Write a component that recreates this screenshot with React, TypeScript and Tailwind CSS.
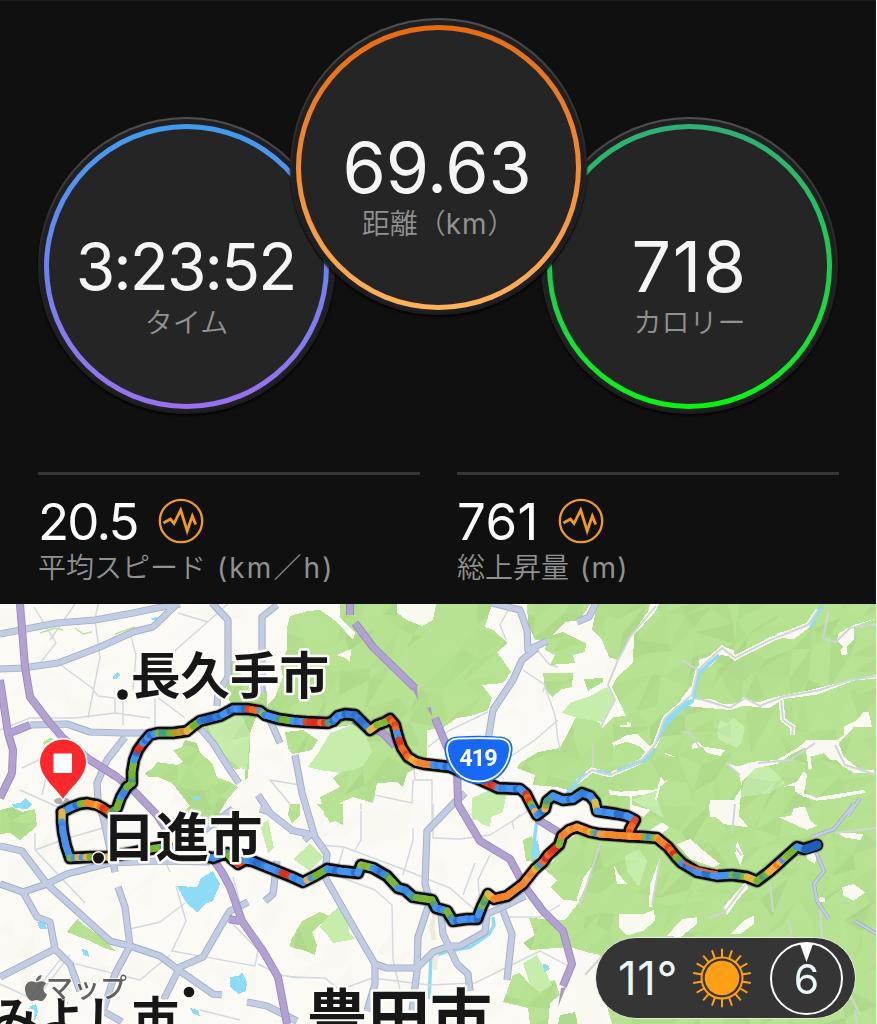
import { ReactNode } from 'react'
import { FaApple } from 'react-icons/fa'

type Point = [number, number]

const UI_FONT = "font-['Inter','Noto_Sans_CJK_JP',sans-serif]"

export default function App() {
  return (
    <main
      className={`flex h-[1024px] w-[876px] flex-col overflow-hidden border-t border-[#1b1b1b] bg-[#101010] ${UI_FONT}`}
    >
      <section className="h-[603px] shrink-0">
        <div className="flex h-[471px] items-start pl-[38px]">
          <Dial
            label="タイム"
            className="mt-[116px]"
            ring="bg-linear-to-b from-[#409bed] via-[#6b82f2] to-[#9971ee]"
          >
            <span className="mr-[2px] text-[64px] tracking-[-1.9px]">3:23:52</span>
          </Dial>
          <Dial
            label={
              <>
                距離（<span className="font-normal tracking-[0.8px]">km</span>）
              </>
            }
            className="z-10 -ml-[45px] mt-[17px]"
            ring="bg-linear-to-b from-[#e56b14] via-[#f08b31] to-[#fcb35c]"
          >
            <span className="mr-[3px] text-[70px] tracking-[-0.2px]">69.63</span>
          </Dial>
          <Dial
            label="カロリー"
            className="-ml-[46px] mt-[116px]"
            ring="bg-linear-to-b from-[#30ae77] via-[#1dcc49] to-[#0af20c]"
          >
            <span className="text-[70px] tracking-[1.5px]">718</span>
          </Dial>
        </div>

        <div className="flex gap-[37px] pl-[38px]">
          <Stat
            label="平均スピード"
            unit={<span className="font-normal tracking-[2.1px]">(km／h)</span>}
          >
            <span className="w-[120px] tracking-[-1.8px]">20.5</span>
          </Stat>
          <Stat
            label="総上昇量"
            unit={<span className="font-normal tracking-[1.2px]">(m)</span>}
          >
            <span className="w-[101px] tracking-[0.4px]">761</span>
          </Stat>
        </div>
      </section>

      <RouteMap />
    </main>
  )
}

interface DialProps {
  label: ReactNode
  ring: string
  className: string
  children: ReactNode
}

const Dial = ({ label, ring, className, children }: DialProps) => (
  <div
    className={`size-[297px] shrink-0 rounded-full bg-linear-to-b from-[#505050] via-[#232325] via-50% to-[#1c1c1d] p-[2px] shadow-[0_2px_2px_#040404] ${className}`}
  >
    <div className="size-full rounded-full bg-[#202022] px-[4px] pt-[5px] pb-[3px]">
      <div className={`size-full rounded-full p-[5px] ${ring}`}>
        <div className="flex size-full flex-col items-center rounded-full bg-[#252525] pt-[97px]">
          <div className="flex h-[82px] items-center leading-none text-[#f5f5f5]">
            {children}
          </div>
          <p className="-mt-[3px] text-[28px] font-[350] leading-[36px] text-[#919191]">
            {label}
          </p>
        </div>
      </div>
    </div>
  </div>
)

interface StatProps {
  label: string
  unit: ReactNode
  children: ReactNode
}

const Stat = ({ label, unit, children }: StatProps) => (
  <div className="w-[382px] border-t-[3px] border-[#353535] pt-[21px]">
    <div className="flex h-[50px] items-center text-[51px] leading-none text-white">
      {children}
      <svg className="size-[46px]" viewBox="0 0 46 46" fill="none" stroke="#f59b1c">
        <circle cx="23" cy="23" r="21.2" strokeWidth="2.3" />
        <path
          d="M5.5 25 12.3 21 16 25.5 22.7 12 29.2 33 34.3 18 37.7 26.5"
          strokeWidth="2.8"
        />
      </svg>
    </div>
    <p className="mt-[2px] flex gap-[11px] text-[28px] font-[350] leading-[40px] text-[#919191]">
      {label} {unit}
    </p>
  </div>
)

// Small seeded generator so terrain and route speckles are stable
const createRandom = (seed: number) => () => {
  seed = (seed * 16807) % 2147483647
  return seed / 2147483647
}

const FORESTS = [
  '290,616 308,611 320,610 337,622 353,640 355,633 340,618 340,604 492,604 485,627 493,630 508,643 497,652 511,672 503,683 482,685 492,698 488,710 470,716 457,718 443,728 427,730 427,757 413,770 407,773 403,787 397,782 377,783 373,803 353,797 340,803 342,818 325,817 320,797 340,787 333,778 340,773 360,765 370,752 365,735 352,725 330,728 300,727 285,722 262,712 275,697 283,677 280,663 287,650 287,628',
  '285,732 303,730 318,740 312,750 292,754 288,748',
  '145,773 153,768 157,762 177,765 183,762 173,750 182,747 185,740 197,743 200,753 212,763 217,777 230,782 238,787 227,800 220,812 216,830 206,818 180,815 190,806 172,783 158,777 148,777',
  '230,662 238,660 238,670 247,683 260,670 267,693 267,707 257,715 250,733 250,745 248,777 245,780 245,767 235,770 230,763 217,750 203,732 207,723 230,703 227,690',
  '0,810 12,807 22,812 35,809 37,826 25,836 20,840 10,833 0,834',
  '77,919 84,925 100,936 115,951 104,948 90,941 67,932',
  '290,947 291,940 302,921 320,912 330,916 312,932 317,945 315,955 303,950',
  '316,804 343,804 343,825 335,821 330,823 325,813',
  '290,804 300,804 300,815 292,823 288,815',
  '42,743 50,738 54,739 44,745',
  // east side hills
  '527,604 590,604 580,620 565,622 548,640 535,640 528,624',
  '547,637 563,632 585,643 585,652 573,655 575,663 550,665 555,655 545,650',
  '543,673 573,673 572,687 562,689 552,697 545,688',
  '597,604 650,604 648,612 630,637 617,660 609,657 602,640 592,630 594,620',
  '577,604 580,604 577,612 570,615',
  '577,640 586,643 586,648 577,650',
  '584,679 603,678 603,682 588,691',
  '659,604 877,604 877,1024 612,1024 597,972 603,965 600,955 590,953 570,947 530,950 523,943 535,935 529,918 565,920 580,901 563,900 551,887 557,880 543,868 553,862 562,845 577,834 640,840 638,822 600,812 594,796 575,792 557,787 533,785 535,775 517,768 520,763 538,752 560,748 567,735 577,715 599,722 602,728 614,717 626,716 620,703 612,687 617,677 633,663 634,635 655,612',
  '523,840 532,836 537,855 535,862 526,861',
  '503,1002 513,975 520,973 530,985 555,980 560,995 550,1003 548,1024 530,1024 528,1008',
  '560,1015 575,1012 578,1024 558,1024',
]

const GROVES = [
  '308,767 320,750 330,733 352,725 365,733 372,752 362,767 340,773 320,770',
  '207,723 230,703 240,712 250,733 247,770 240,768 217,750',
  '320,927 330,914 343,904 350,934 355,939 333,943 328,936',
  '293,859 310,844 323,857 310,871',
  '470,814 480,804 493,804 490,827 482,824',
  '570,703 590,696 607,687 615,700 602,722 577,718 562,713',
  '472,798 490,790 506,796 503,812 483,820 472,820',
  '523,963 537,955 545,970 552,985 540,992 530,985',
  '260,825 268,820 274,848 268,853',
  '720,720 727,723 734,718 745,727 742,742 737,748 720,740 717,733',
  '754,767 770,767 785,783 770,793 740,797 744,782',
  '632,800 657,790 657,800 664,818 644,807',
  '625,856 639,849 647,861 639,887 627,871',
]

// Clearings are traced at 3x, relative to their own tile
const NORTH_CLEARINGS = [
  '440,140 470,150 470,170 430,165 400,200 366,215 366,180 390,172',
  '310,300 345,255 360,300 400,296 440,313 480,310 500,290 540,308 600,290 700,270 800,245 900,225 900,235 830,242 720,284 620,297 575,325 500,317 460,330 325,318',
  '860,335 875,335 885,380 830,382 785,430 800,470 850,510 890,510 890,520 830,518 800,500 780,480 760,480 740,460 700,470 705,505 695,510 690,470 685,442 640,465 600,492 560,500 535,505 495,545 490,600 475,655 400,650 400,600 470,600 495,560 485,520 450,490 480,500 530,485 600,480 660,445 690,420 780,420 800,405 800,380 840,360',
  '900,55 830,80 830,120 810,140 812,163 795,165 790,150 800,140 780,120 785,100 830,75',
  '680,515 690,525 685,560 680,580 720,592 780,582 860,570 867,578 780,595 720,602 680,590 655,575 655,558 620,560 660,545',
  '345,435 362,425 380,440 445,450 430,468 390,458 375,440 345,447',
  '130,375 150,375 150,365 163,370 163,380 130,380',
  '260,458 275,462 300,472 275,468',
  '105,430 150,405 180,402 205,425 225,445 215,465 190,440 150,425 110,438',
  '252,528 262,545 275,537 250,560 240,600 233,600 240,572 200,585 165,588 165,615 220,630 200,650 160,640 160,590 100,585 95,570 130,575 240,568',
  '640,655 650,625 680,620 690,660',
  '600,100 690,75 700,80 650,118 600,112',
]

const SOUTH_CLEARINGS = [
  '395,0 490,0 485,35 515,70 440,60 395,20',
  '605,40 650,35 660,12 685,10 700,50 720,65 690,78 650,60',
  '300,120 340,105 380,140 430,180 410,190 340,165',
  '480,110 500,155 490,185 475,150',
  '795,250 830,240 865,265 830,290 800,275',
  '715,285 735,278 745,285 745,293 720,293',
  '125,330 200,330 230,318 235,350 200,380 150,395 125,370',
  '315,345 360,340 360,360 310,400 270,395',
  '530,335 530,360 490,390 460,390 500,350',
  '505,235 515,250 480,290 450,335 440,310 460,285',
  '110,180 125,210 150,240 120,240',
  '50,180 30,240 0,300 0,280 20,220',
  '250,160 235,240 225,310 215,310 220,240',
  '780,85 860,90 850,108 800,100',
  '255,55 278,70 250,92 215,80',
  '685,130 720,140 715,180 690,165',
  '0,440 45,450 100,475 60,530 85,620 80,660 0,660',
]

const PONDS = [
  '177,886 197,887 201,878 213,871 220,884 213,901 205,904 197,912 187,904',
  '230,977 238,976 242,972 247,982 246,991 239,994 230,987',
  '12,804 20,803 25,798 32,804 27,809 14,808',
  '37,922 45,921 47,929 40,929',
  '82,949 88,951 89,957 83,955',
  '113,676 117,672 120,675 117,679 113,679',
  '151,618 157,617 158,620 152,620',
  '192,797 198,796 202,799 195,801',
  '30,1006 36,1004 38,1012 34,1024 28,1016',
  '190,1008 198,1010 200,1016 193,1014',
  '60,1004 66,995 68,1004',
  '543,964 548,965 550,969 544,972',
]

const HIGHWAYS = [
  'M0 634 57 623 95 620 133 613 157 608 180 604',
  'M0 669 23 668 58 663 100 647 133 632 153 627 178 603',
  'M212 603 228 620 228 677 218 693 217 706',
  'M277 605 262 617 262 693',
  'M270 720 280 743 M295 755 302 793 315 837 327 854 325 877 350 921 375 964 375 984 367 1011',
  'M30 725 67 724 90 732 123 733 150 733',
  'M125 737 107 760 97 783 98 800 103 817 115 872',
  'M200 728 213 743 230 770 239 783',
  'M258 795 270 813 293 831 M260 809 270 812 M203 831 233 809',
  'M0 846 22 851 47 884 110 941 130 946 160 956 180 971 213 994 222 995',
  'M0 884 23 892 47 884 67 874 110 863 160 861 210 862',
  'M23 892 37 917 50 922 55 949 70 964 80 991',
  'M55 949 0 977',
  'M118 887 125 907 130 946 115 974 103 1011 122 1022',
  'M248 902 230 911 222 924 203 957 180 967 163 1001',
  'M277 861 273 894 265 901',
  'M247 1002 267 1006 297 1021',
  'M465 793 453 804 427 831 425 884 430 901 418 937 417 971 412 1011',
  'M375 964 387 968 417 968 433 952 450 946 460 946 485 932 487 914 503 907 525 896',
  'M440 904 443 934 457 964 468 974 470 991',
  'M503 911 512 934 507 980',
  'M492 603 520 610 527 630 528 650 547 641 M537 648 522 660 513 680 493 710 488 740',
  'M596 603 589 617 577 622',
  'M290 830 309 834 M304 840 314 832',
]

const THIN_HIGHWAYS = [
  'M854 804 834 829 812 837',
  'M816 852 824 871 814 884 817 901 829 919',
  'M855 921 877 934',
  'M860 798 848 816',
]

const EXPRESSWAYS = [
  'M20 604 25 667 30 697 50 723 63 738 90 760 117 777 133 790 157 815 168 832',
  'M215 862 222 872 230 887 242 921 263 951 278 977 287 1024',
  'M229 919 240 921',
  'M0 680 8 733 13 750 12 773 0 798',
  'M10 733 30 725',
  'M350 604 350 615 M355 623 373 647 415 688 M435 718 447 747 457 767 458 804 480 841 510 859 525 887 543 911 563 931 572 964 563 986',
  'M537 819 558 832',
  'M353 720 383 733 395 746',
]

const STREETS = [
  'M98 604 95 620 100 657 88 718 M130 632 136 655 133 690',
  'M58 663 92 688 98 696 115 698 115 713 M155 690 155 730 M157 697 185 718',
  'M0 730 30 718 75 718 115 713 150 718 M123 690 123 725 M228 604 170 655',
  'M34 607 56 643 37 667 M75 604 50 640 M178 613 208 622',
  'M290 804 270 780 300 785 M22 768 45 757 M20 790 60 808 M55 740 42 795',
  'M35 833 35 850 85 903 M35 850 68 838 110 826 M130 929 160 922 185 903',
  'M176 886 186 921 172 951 255 966 258 950 230 921 M165 861 170 872',
  'M0 984 30 998 60 960 140 980 170 955 M70 955 35 1000',
  'M200 1010 240 1020 M233 877 240 903 M258 964 280 975 300 978',
  'M290 977 325 978 340 990 372 978 430 985 475 983 540 951 570 967',
  'M320 845 344 847 405 870 450 888 475 910 M344 847 335 875 375 890 392 905 393 960 400 990',
  'M361 811 361 840 355 850 M413 828 413 840 403 875 M433 838 460 839 490 835 530 810',
  'M433 804 433 838 M475 863 463 895 M490 855 478 880 480 905 M503 917 540 917 560 905',
  'M428 747 450 730 488 712 M413 755 415 780 432 780 432 830 M413 780 412 803 375 795 372 803',
  'M508 610 500 625 506 640 M537 650 550 665 558 667 M523 670 545 685 543 692',
  'M545 687 555 715 558 740 560 750 M510 757 535 740 558 720',
  'M361 803 361 810 M514 829 512 822 520 815',
]

const VALLEY_ROADS = [
  'M818 610 808 625 770 640 735 658 722 648 698 670 692 695 665 718 655 745 640 762 610 775 592 770 577 782',
  'M781 700 783 720 793 727 792 735',
]

const HILL_ROADS = [
  'M656 606 630 637 618 660 608 685 615 700 600 728',
  'M698 670 682 660',
  'M829 610 823 638 836 642 850 628 877 624',
  'M697 698 730 708 745 698 760 706 782 697 820 690 850 680 877 676',
  'M758 763 790 760 815 743 M835 745 845 765 877 775 M682 732 690 733 700 748',
  'M593 745 593 768 M601 840 590 875 580 905 M660 860 652 905',
  'M735 804 732 833 M733 845 742 855 M745 885 725 912 710 918 M770 885 773 912',
  'M788 920 792 935 M820 910 822 938 M855 1010 857 1024 M603 955 585 975',
  'M726 763 740 775 M810 794 818 798',
  'M835 833 875 828 M848 990 860 1015',
]

const RIVERS = [
  'M822 606 815 617 811 627',
  'M719 655 699 673 695 688 694 699',
  'M654 748 645 760 617 771',
  'M611 774 597 771',
  'M585 773 567 794 M577 784 567 793',
  'M493 917 494 925 489 934 470 947 445 952 431 957 429 999',
  'M537 820 534 842',
]

// Each stop holds the colour mix of the stretch that leads to it
type Mix = 'b' | 'd' | 'g' | 'm' | 'y' | 'o' | 'r'
type Stop = [number, number, Mix]

const UPPER_ROUTE: Stop[] = [
  [62, 812, 'b'], [72, 807, 'b'], [80, 804, 'b'], [87, 803, 'g'], [97, 805, 'o'],
  [103, 808, 'm'], [110, 813, 'r'], [117, 808, 'g'], [121, 797, 'g'], [127, 787, 'b'],
  [132, 783, 'g'], [132, 772, 'g'], [134, 760, 'g'], [138, 750, 'b'], [143, 743, 'r'],
  [150, 735, 'b'], [158, 733, 'b'], [173, 733, 'g'], [187, 731, 'm'], [193, 726, 'y'],
  [200, 721, 'g'], [220, 716, 'd'], [233, 709, 'b'], [248, 709, 'b'], [260, 711, 'r'],
  [265, 715, 'm'], [279, 719, 'b'], [293, 721, 'g'], [306, 722, 'b'], [328, 723, 'r'],
  [333, 721, 'g'], [338, 716, 'b'], [345, 714, 'b'], [355, 715, 'd'], [363, 723, 'd'],
  [370, 730, 'b'], [377, 725, 'y'], [385, 722, 'm'], [390, 719, 'g'], [395, 725, 'r'],
  [397, 733, 'r'], [399, 740, 'm'], [402, 748, 'r'], [408, 757, 'r'], [416, 762, 'm'],
  [424, 764, 'o'], [433, 765, 'o'], [450, 767, 'b'], [462, 772, 'b'], [485, 782, 'm'],
  [498, 788, 'r'], [520, 789, 'b'], [526, 794, 'm'], [531, 804, 'r'], [537, 815, 'm'],
  [545, 809, 'b'], [547, 801, 'm'], [553, 796, 'g'], [563, 800, 'b'], [573, 799, 'b'],
  [582, 793, 'b'], [590, 796, 'd'], [595, 802, 'b'], [597, 811, 'y'], [617, 814, 'b'],
  [627, 816, 'b'], [635, 820, 'b'], [630, 829, 'r'], [629, 836, 'r'],
]

const LOWER_ROUTE: Stop[] = [
  [62, 812, 'b'], [62, 822, 'y'], [63, 832, 'b'], [66, 846, 'b'], [70, 858, 'b'],
  [90, 857, 'm'], [107, 857, 'g'], [130, 853, 'y'], [150, 849, 'm'], [163, 847, 'g'],
  [185, 852, 'b'], [213, 858, 'b'], [227, 853, 'b'], [232, 859, 'g'], [238, 864, 'm'],
  [245, 860, 'r'], [252, 861, 'b'], [267, 867, 'd'], [282, 873, 'b'], [292, 877, 'r'],
  [303, 882, 'b'], [315, 876, 'm'], [327, 869, 'g'], [340, 871, 'b'], [358, 873, 'b'],
  [361, 865, 'b'], [373, 868, 'm'], [387, 876, 'b'], [398, 888, 'g'], [405, 890, 'b'],
  [413, 897, 'b'], [432, 900, 'g'], [436, 908, 'g'], [447, 911, 'b'], [453, 921, 'g'],
  [467, 919, 'b'], [477, 919, 'b'], [482, 906, 'b'], [488, 894, 'g'], [494, 899, 'y'],
  [507, 896, 'o'], [523, 884, 'o'], [535, 869, 'o'], [543, 862, 'm'], [548, 855, 'r'],
  [559, 845, 'r'], [562, 836, 'm'], [569, 830, 'o'], [577, 827, 'o'], [590, 832, 'o'],
  [600, 834, 'm'], [627, 836, 'o'], [645, 837, 'o'], [657, 838, 'm'], [668, 847, 'o'],
  [676, 857, 'r'], [682, 863, 'g'], [697, 872, 'b'], [717, 876, 'b'], [732, 875, 'b'],
  [747, 877, 'g'], [757, 881, 'y'], [769, 872, 'g'], [777, 865, 'y'], [788, 855, 'm'],
  [797, 847, 'g'], [804, 849, 'b'], [817, 845, 'd'],
]

const MIXES: Record<Mix, string[]> = {
  b: ['#4594ef', '#4594ef', '#3a86e4', '#4594ef', '#2c6fce'],
  d: ['#2c6fce', '#3380dd', '#2a68c4'],
  g: ['#76b32f', '#76b32f', '#7db733', '#4a9b8a'],
  m: ['#7db733', '#f0ad3a', '#4594ef', '#ef7a25', '#8dbb35'],
  y: ['#f2b03e', '#f2b03e', '#d8bc44'],
  o: ['#f5832b', '#f5832b', '#f08a2c', '#f79a35'],
  r: ['#dc3420', '#e8431e', '#d92c22', '#ef6a22'],
}

const toPath = (stops: Stop[]) =>
  'M' + stops.map(([x, y]) => `${x} ${y}`).join(' ')

const splitRoute = (stops: Stop[], random: () => number) => {
  const pieces: { d: string; color: string }[] = []
  for (let i = 1; i < stops.length; i++) {
    const [x1, y1] = stops[i - 1]
    const [x2, y2, mix] = stops[i]
    const count = Math.max(1, Math.round(Math.hypot(x2 - x1, y2 - y1) / 4))
    for (let n = 0; n < count; n++) {
      const at = (t: number) => `${x1 + (x2 - x1) * t} ${y1 + (y2 - y1) * t}`
      const colors = MIXES[mix]
      pieces.push({
        d: `M${at(n / count)} ${at((n + 1) / count)}`,
        color: colors[Math.floor(random() * colors.length)],
      })
    }
  }
  return pieces
}

const buildFacets = () => {
  const random = createRandom(77)
  const size = 21
  const cols = 43
  const rows = 22
  const grid: Point[][] = []
  for (let r = 0; r <= rows; r++) {
    grid.push([])
    for (let c = 0; c <= cols; c++) {
      grid[r].push([
        Math.round(c * size - 10 + (random() - 0.5) * 22),
        Math.round(595 + r * size + (random() - 0.5) * 22),
      ])
    }
  }
  const facets: { points: string; fill: string; opacity: number }[] = []
  for (let r = 0; r < rows; r++) {
    for (let c = 0; c < cols; c++) {
      const [a, b, d, e] = [grid[r][c], grid[r][c + 1], grid[r + 1][c], grid[r + 1][c + 1]]
      for (const triangle of [[a, b, d], [b, e, d]]) {
        const shade = random()
        facets.push({
          points: triangle.join(' '),
          fill: shade < 0.6 ? '#4d6b3c' : '#ffffff',
          opacity: shade < 0.6 ? shade * shade * 0.26 : (shade - 0.6) * 0.12,
        })
      }
    }
  }
  return facets
}

const FACETS = buildFacets()
const ROUTE_PIECES = [
  ...splitRoute(UPPER_ROUTE, createRandom(11)),
  ...splitRoute(LOWER_ROUTE, createRandom(29)),
]

const Polygons = ({ items }: { items: string[] }) =>
  items.map((points) => <polygon key={points} points={points} />)

const Lines = ({ items }: { items: string[] }) =>
  items.map((d) => <path key={d} d={d} />)

const Facets = () =>
  FACETS.map(({ points, fill, opacity }) => (
    <polygon key={points} points={points} fill={fill} opacity={opacity} />
  ))

const RouteMap = () => (
  <section className="relative h-[420px] shrink-0 overflow-hidden">
    <svg className="block h-[420px] w-[876px]" viewBox="0 604 876 420">
      <defs>
        <clipPath id="forests">
          <Polygons items={FORESTS} />
        </clipPath>
      </defs>

      <rect y="604" width="876" height="420" fill="#fbfaf4" />
      <g opacity="0.15">
        <Facets />
      </g>

      <g shapeRendering="crispEdges">
        <g fill="#b6e291">
          <Polygons items={FORESTS} />
        </g>
        <g fill="#c6edab">
          <Polygons items={GROVES} />
        </g>
      </g>
      <g clipPath="url(#forests)" opacity="0.9">
        <Facets />
      </g>

      <g fill="#f9f8f1" shapeRendering="crispEdges">
        <polygon points="397,604 436,604 433,620 422,626 407,620 397,613" />
        <polygon points="337,655 351,649 350,663 345,658" />
        <g transform="translate(577 600) scale(0.3333)">
          <Polygons items={NORTH_CLEARINGS} />
        </g>
        <g transform="translate(577 804) scale(0.3333)">
          <Polygons items={SOUTH_CLEARINGS} />
        </g>
      </g>
      <g fill="none" stroke="#f6f5ef" strokeWidth="5" shapeRendering="crispEdges">
        <Lines items={VALLEY_ROADS} />
      </g>

      <g fill="#8edbf8" shapeRendering="crispEdges">
        <Polygons items={PONDS} />
        <polygon points="533,842 538,840 540,854 534,860 531,856" />
        <polygon points="694,698 686,701 677,706 664,718 659,732 655,746 661,737 668,724 682,711 694,702" />
      </g>
      <g fill="none" stroke="#8edbf3" strokeWidth="3.5">
        <Lines items={RIVERS} />
      </g>

      <g fill="none" stroke="#d3d8df" strokeWidth="1.4">
        <Lines items={STREETS} />
      </g>
      <g fill="none" stroke="#cfd5d6" strokeWidth="1.9">
        <Lines items={VALLEY_ROADS} />
        <Lines items={HILL_ROADS} />
      </g>
      <path
        d="M40 633 55 628 63 630 M75 628 83 634 92 632 M115 634 135 627"
        fill="none"
        stroke="#b9e39a"
        strokeWidth="1.5"
      />
      <path
        d="M438 905 432 925 434 940 M437 950 434 970"
        fill="none"
        stroke="#f0ead8"
        strokeWidth="5"
      />

      <g fill="none" strokeLinejoin="round">
        <g stroke="#a2aec9" strokeWidth="7.2">
          <Lines items={HIGHWAYS} />
        </g>
        <g stroke="#c2cce2" strokeWidth="5.4">
          <Lines items={HIGHWAYS} />
        </g>
        <g stroke="#a2aec9" strokeWidth="4">
          <Lines items={THIN_HIGHWAYS} />
        </g>
        <g stroke="#c2cce2" strokeWidth="2.4">
          <Lines items={THIN_HIGHWAYS} />
        </g>
        <g stroke="#9a8abd" strokeWidth="8">
          <Lines items={EXPRESSWAYS} />
        </g>
        <g stroke="#b2a2d2" strokeWidth="6.2">
          <Lines items={EXPRESSWAYS} />
        </g>
      </g>
      <path d="M412 688 417 686 418 700ZM427 708 431 707 432 716ZM561 988 566 987 558 1007Z" fill="#a898c8" />

      <g fill="none" strokeLinejoin="round" strokeLinecap="round">
        <g stroke="#000" strokeOpacity="0.22" strokeWidth="14.5">
          <path d={toPath(UPPER_ROUTE)} />
          <path d={toPath(LOWER_ROUTE)} />
        </g>
        <g stroke="#0c0c0c" strokeWidth="12.4">
          <path d={toPath(UPPER_ROUTE)} />
          <path d={toPath(LOWER_ROUTE)} />
        </g>
        {ROUTE_PIECES.map(({ d, color }) => (
          <path key={d} d={d} stroke={color} strokeWidth="7" />
        ))}
        <path d="M683 862Q698 870 717 872" stroke="#e9622a" strokeWidth="2" />
        <path d="M817 845 806 849" stroke="#1f5fb8" strokeWidth="9" />
      </g>

      <MapLabels />
      <RoadShield />
      <FinishPin />
      <MapsLogo />
    </svg>

    <WeatherPill />
  </section>
)

const MapLabels = () => (
  <g
    className="font-['Noto_Sans_CJK_JP',sans-serif] font-bold"
    fill="#171717"
    stroke="#fdfcf8"
    strokeWidth="5"
    strokeLinejoin="round"
    paintOrder="stroke"
  >
    <text x="131" y="694" fontSize="49.5">長久手市</text>
    <text x="102" y="856.5" fontSize="53.5">日進市</text>
    <text x="-9" y="1036" fontSize="47">みよし市</text>
    <text x="306" y="1041" fontSize="62">豊田市</text>
    <circle cx="122.5" cy="694.5" r="5.3" strokeWidth="3" />
    <circle cx="98.5" cy="858" r="5.5" strokeWidth="3" />
    <circle cx="189" cy="992" r="5.3" strokeWidth="3" />
  </g>
)

const RoadShield = () => (
  <g>
    <path
      d="M457 736.500Q478.5 735 500 736.500C509 737.500 513 742 512.500 750C511 767 499 784 478.5 784C458 784 446 767 444.500 750C444 742 448 737.500 457 736.500Z"
      fill="#1769f5"
    />
    <path
      d="M457.500 738.700Q478.5 737.500 499.500 738.700C507.500 739.500 510.500 743 510 750C508.500 766 497 781.500 478.5 781.500C460 781.500 448.500 766 447 750C446.500 743 449.500 739.500 457.500 738.700Z"
      fill="#1769f5"
      stroke="#fff"
      strokeWidth="1.8"
    />
    <text
      x="478"
      y="765.5"
      className="font-['Roboto',sans-serif] font-bold"
      fontSize="23.5"
      letterSpacing="-0.9"
      textAnchor="middle"
      fill="#fff"
    >
      419
    </text>
  </g>
)

const FinishPin = () => (
  <g>
    <ellipse cx="62" cy="801" rx="8" ry="3.5" fill="#000" opacity="0.3" />
    <path
      d="M63 799C57 789 40 777 40 762A23 22.5 0 0 1 86 762C86 777 69 789 63 799Z"
      fill="#fc282c"
      stroke="#fff"
      strokeWidth="3"
      paintOrder="stroke"
    />
    <rect x="53.5" y="753.5" width="18.5" height="19.5" fill="#fff" />
  </g>
)

const MapsLogo = () => (
  <g opacity="0.85">
    <FaApple x="21" y="973" size={30} color="#505050" />
    <text
      x="46"
      y="998"
      className="font-['Noto_Sans_CJK_JP',sans-serif] font-medium"
      fontSize="27"
      fill="#474747"
      stroke="#fff"
      strokeWidth="1.5"
      paintOrder="stroke"
    >
      マップ
    </text>
  </g>
)

const WeatherPill = () => (
  <div className="absolute left-[595px] top-[333px] flex h-[82px] w-[261px] items-center rounded-full border border-[#e6eedd] bg-[#353535] text-[#e9f7fb]">
    <span className="w-[96px] pl-[22px] text-[46px] leading-none tracking-[0.6px]">
      11°
    </span>
    <svg className="size-[60px]" viewBox="-30 -30 60 60" fill="none" stroke="#ff9f13">
      <circle r="17.3" fill="#ff9f13" stroke="none" />
      <circle r="20.5" strokeWidth="2" />
      {Array.from({ length: 18 }, (_, i) => (
        <path key={i} d="M0 -20V-29.3" strokeWidth="2" transform={`rotate(${i * 20})`} />
      ))}
    </svg>
    <div className="relative ml-[18px] flex size-[73px] items-center justify-center rounded-full border-2 border-white">
      <svg className="absolute left-[28px] top-0 h-[18px] w-[13px]" viewBox="0 0 13 18">
        <path d="M0 0H13L6.5 18Z" fill="#fff" />
      </svg>
      <span className="pt-[3px] text-[41px] leading-none">6</span>
    </div>
  </div>
)
